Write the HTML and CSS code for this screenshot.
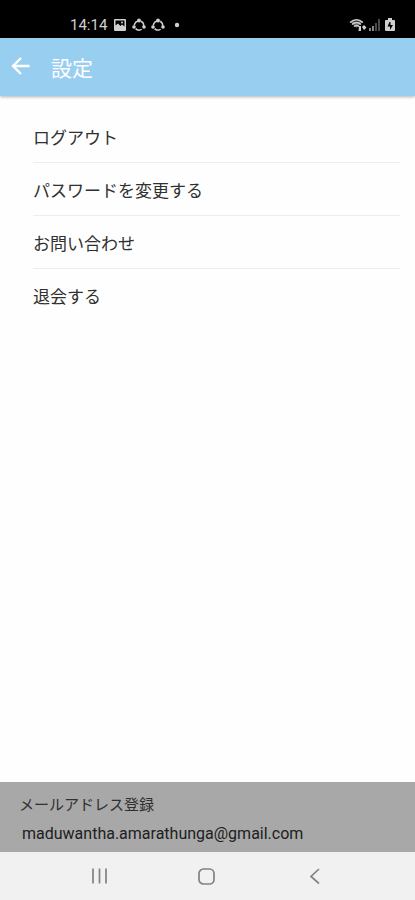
FILE: index.html
```html
<!DOCTYPE html>
<html lang="ja">
<head>
<meta charset="utf-8">
<meta name="viewport" content="width=device-width, initial-scale=1">
<title>設定</title>
<link rel="stylesheet" href="styles.css">
</head>
<body>
<div class="status">
  <div class="status-group">
    <span class="clock">14:14</span>
    <svg class="icon-image" width="14" height="14" viewBox="0 0 14 14"><path fill="currentColor" fill-rule="evenodd" d="M2 1h10q1 0 1 1v10q0 1-1 1H2q-1 0-1-1V2q0-1 1-1zM2.500 2.500v5l2.500-2 2.500 2.500 1.500-1.500 2.500 2v-6z"/><circle cx="9" cy="4.500" r="1" fill="currentColor"/></svg>
    <svg width="14" height="14" viewBox="0 0 14 14"><circle cx="7" cy="7.500" r="4.600" fill="none" stroke="currentColor" stroke-width="1.500" stroke-dasharray="6.500 3.130" transform="rotate(-68 7 7.500)"/><g fill="currentColor"><circle cx="7" cy="2.500" r="1.900"/><circle cx="2" cy="9" r="1.800"/><circle cx="12" cy="9" r="1.800"/></g></svg>
    <svg width="14" height="14" viewBox="0 0 14 14"><circle cx="7" cy="7.500" r="4.600" fill="none" stroke="currentColor" stroke-width="1.500" stroke-dasharray="6.500 3.130" transform="rotate(-68 7 7.500)"/><g fill="currentColor"><circle cx="7" cy="2.500" r="1.900"/><circle cx="2" cy="9" r="1.800"/><circle cx="12" cy="9" r="1.800"/></g></svg>
    <svg width="14" height="14" viewBox="0 0 14 14"><circle cx="7" cy="7" r="2.200" fill="currentColor"/></svg>
  </div>
  <div class="status-group status-right">
    <svg width="18" height="14" viewBox="0 0 18 14"><g fill="none" stroke="currentColor" stroke-width="1.500"><path d="M1 4.500Q7.500-1 14 4.500M3 6.500q4.500-4 9 0M5 8.500q2.500-2 5 0"/></g><path fill="currentColor" d="M1 3.500h13L7.500 10z" opacity=".45"/><path fill="currentColor" d="M10 8h2v5H9.500zM13 9l2-2 2.500 2.500L15 12z"/></svg>
    <svg width="12" height="14" viewBox="0 0 12 14"><path fill="currentColor" opacity=".65" d="M0 10h2v3H0zM3 8h2v5H3z"/><path fill="currentColor" opacity=".35" d="M6 5h2v8H6zM9 1h2v12H9z"/></svg>
    <svg width="14" height="14" viewBox="0 0 14 14"><path fill="currentColor" fill-rule="evenodd" d="M5 0h4v2h2q1 0 1 1v9q0 1-1 1H3q-1 0-1-1V3q0-1 1-1h2zM6.500 4L4.500 8.500H7V12l3-5H7.500V4z"/></svg>
  </div>
</div>
<header class="bar">
  <button class="back" type="button" aria-label="戻る">
    <svg width="20" height="20" viewBox="0 0 20 20"><path d="M18.500 9H2.500M10 1L2 9l8 8" fill="none" stroke="currentColor" stroke-width="2.400"/></svg>
  </button>
  <h1 class="title">設定</h1>
</header>
<main class="content">
  <ul class="menu">
    <li class="row"><a href="#logout">ログアウト</a></li>
    <li class="row"><a href="#password">パスワードを変更する</a></li>
    <li class="row"><a href="#contact">お問い合わせ</a></li>
    <li class="row"><a href="#leave">退会する</a></li>
  </ul>
</main>
<footer class="account">
  <p class="label">メールアドレス登録</p>
  <p class="mail">maduwantha.amarathunga@gmail.com</p>
</footer>
<nav class="system">
  <button type="button" aria-label="履歴"><svg width="18" height="18" viewBox="0 0 18 18"><path d="M2 1.500v15M8.500 1.500v15M15 1.500v15" stroke="currentColor" stroke-width="1.700"/></svg></button>
  <button type="button" aria-label="ホーム"><svg width="18" height="18" viewBox="0 0 18 18"><rect x="1" y="2" width="15" height="15" rx="4.500" fill="none" stroke="currentColor" stroke-width="1.700"/></svg></button>
  <button type="button" aria-label="前へ"><svg width="18" height="18" viewBox="0 0 18 18"><path d="M13 2L5 9.500l8 7" fill="none" stroke="currentColor" stroke-width="1.700"/></svg></button>
</nav>
</body>
</html>
```
FILE: styles.css
```css
* {
  box-sizing: border-box;
}

body {
  margin: 0;
  min-height: 100vh;
  display: flex;
  flex-direction: column;
  background: #fefefe;
  color: #303030;
  font-family: Roboto, "Noto Sans CJK JP", sans-serif;
}

button {
  border: 0;
  padding: 0;
  background: none;
  color: inherit;
  display: flex;
  align-items: center;
  justify-content: center;
}

svg {
  display: block;
}

.status {
  display: flex;
  justify-content: space-between;
  align-items: center;
  height: 38px;
  padding: 11px 18px 0 70px;
  background: #000;
  color: #d0d0d0;
}

.status-group {
  display: flex;
  align-items: center;
  gap: 5px;
}

.status-right {
  gap: 2px;
}

.clock {
  margin-right: 1px;
  font-size: 15px;
  line-height: 18px;
}

.bar {
  display: flex;
  align-items: center;
  gap: 20px;
  height: 58px;
  padding: 0 11px;
  background: #98cef0;
  color: #fff;
  box-shadow: 0 1px 3px rgba(0, 0, 0, 0.3);
}

.back {
  width: 20px;
  height: 40px;
}

.title {
  margin: 0;
  padding-top: 3px;
  font-size: 21px;
  line-height: 30px;
  font-weight: 400;
}

.content {
  flex: 1;
  padding: 14px 15px 0 33px;
}

.menu {
  margin: 0;
  padding: 0;
  list-style: none;
}

.row + .row {
  border-top: 1px solid #ededed;
}

.row a {
  display: block;
  padding: 16px 0 12px;
  color: inherit;
  font-size: 17px;
  line-height: 24px;
  text-decoration: none;
}

.account {
  padding: 12px 19px 6px;
  background: #a8a8a8;
}

.label,
.mail {
  margin: 0;
  font-size: 15px;
  line-height: 22px;
}

.mail {
  padding: 6px 3px 0;
  font-size: 16px;
  line-height: 24px;
  color: #202020;
}

.system {
  display: flex;
  justify-content: center;
  height: 48px;
  background: #f1f1f1;
  color: #828282;
}

.system button {
  width: 26%;
}
```
